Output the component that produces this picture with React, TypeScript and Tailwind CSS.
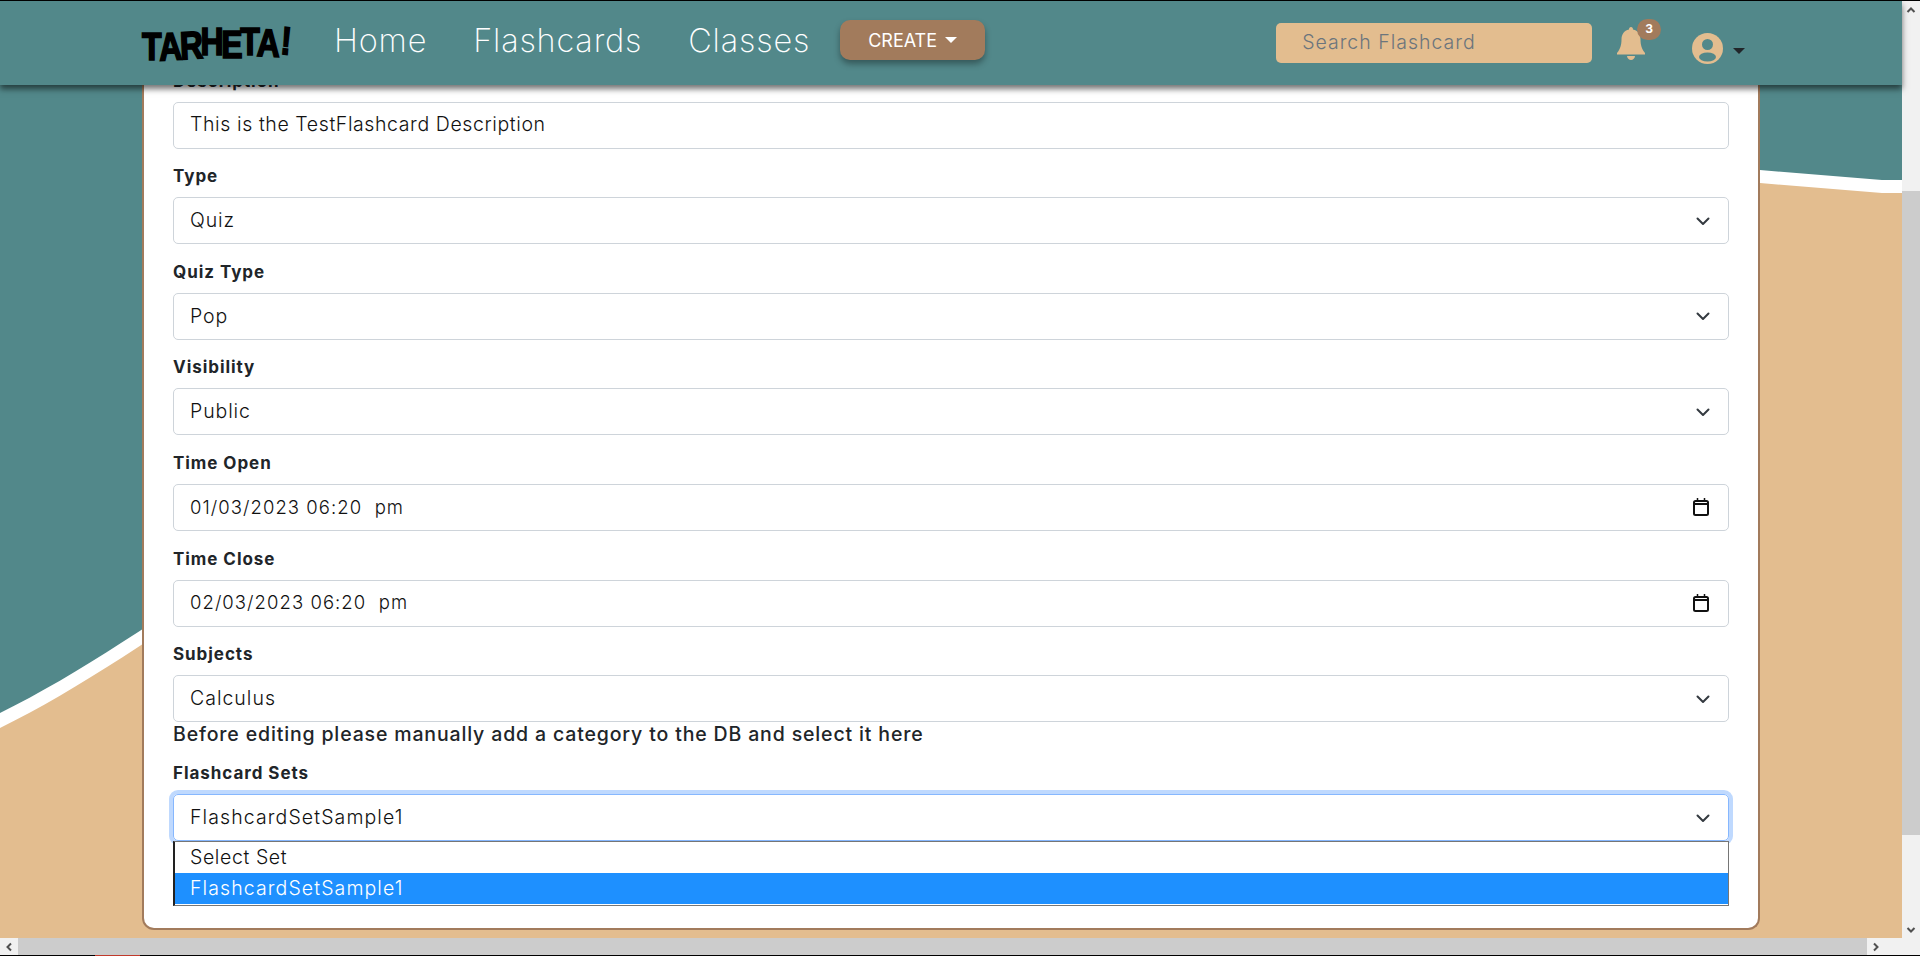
const POPPINS = "font-['Inter','Noto_Sans',sans-serif]";

function Chevron() {
  return (
    <svg width="16" height="16" viewBox="0 0 16 16" fill="none" stroke="#343a40" strokeWidth="2" strokeLinecap="round" strokeLinejoin="round">
      <path d="M2.500 5.500L8 11l5.500-5.500" />
    </svg>
  );
}

function FieldLabel({ children }: { children: string }) {
  return <label className="block mb-[9px] text-[17px] leading-6 font-bold text-[#212529] tracking-[0.95px]">{children}</label>;
}

function SelectField({ label, value }: { label: string; value: string }) {
  return (
    <div className="mb-[15.6px]">
      <FieldLabel>{label}</FieldLabel>
      <div className="h-[47px] pl-4 pr-[17px] flex items-center justify-between bg-white border border-[#ced4da] rounded-[5px] text-[19.5px] font-light text-[#111] tracking-[0.9px]">
        <span>{value}</span>
        <Chevron />
      </div>
    </div>
  );
}

function DateField({ label, value }: { label: string; value: string }) {
  return (
    <div className="mb-[15.6px]">
      <FieldLabel>{label}</FieldLabel>
      <div className="h-[47px] pl-4 pr-[19px] flex items-center justify-between bg-white border border-[#ced4da] rounded-[5px] text-[18.5px] font-light text-[#111] tracking-[1.05px]">
        <span className="whitespace-pre">{value}</span>
        <svg width="16" height="18" viewBox="0 0 16 18" fill="none" stroke="#111" strokeWidth="2">
          <rect x="1" y="3" width="14" height="14" rx="1.500" />
          <path d="M1 6h14" />
          <path d="M4.500 0v3M11.500 0v3" strokeWidth="1.500" />
        </svg>
      </div>
    </div>
  );
}

function Logo() {
  return (
    <div className="w-[150px] h-[40px] flex items-center font-['Liberation_Sans',sans-serif] font-bold text-black text-[32px] leading-none [-webkit-text-stroke:1.4px_black] tracking-[-2.4px] select-none scale-y-[1.22] origin-center">
      <span className="inline-block translate-y-[3px]">T</span>
      <span className="inline-block translate-y-[3px] -rotate-3">A</span>
      <span className="inline-block translate-y-[2px] -rotate-3">R</span>
      <span className="inline-block -translate-y-[1px]">H</span>
      <span className="inline-block translate-y-[1px]">E</span>
      <span className="inline-block -translate-y-[1px]">T</span>
      <span className="inline-block rotate-2">A</span>
      <span className="inline-block -translate-y-[2px] ml-[3px] rotate-6">!</span>
    </div>
  );
}

function Navbar() {
  return (
    <header className="relative z-10 h-[84px] shrink-0 bg-[#52888a] shadow-[0_4px_6px_rgba(0,0,0,0.55)] flex items-center pl-[142px]">
      <Logo />
      <nav className="ml-[42px] -mt-[3px] flex items-center gap-[46px] text-[32.5px] font-extralight text-white tracking-[0.8px]">
        <span>Home</span>
        <span>Flashcards</span>
        <span>Classes</span>
      </nav>
      <button className="ml-[30px] -mt-[6px] w-[145px] h-[40px] flex items-center justify-center gap-2 rounded-[10px] bg-[#a27b5c] text-white text-[18px] font-normal shadow-[0_4px_6px_rgba(0,0,0,0.35)]">
        CREATE
        <span className="w-0 h-0 border-x-[6px] border-x-transparent border-t-[6px] border-t-white" />
      </button>
      <div className="ml-[291px] w-[316px] h-[40px] flex items-center pl-[26px] rounded-[5px] bg-[#e3bd8f] text-[19.5px] font-light text-[#6c757d] tracking-[1px]">
        Search Flashcard
      </div>
      <div className="relative ml-[25px] w-[28px] h-[33px]">
        <svg width="28" height="33" viewBox="0 0 28 33" fill="#e3bd8f">
          <path d="M14 0c1.300 0 2 1 2 2.500 5 1 7.500 5 7.500 10 0 6 1.500 9 3 11.500l1.500 2v1.500H0V26l1.500-2c1.500-2.500 3-5.500 3-11.500 0-5 2.500-9 7.500-10C12 1 12.700 0 14 0z" />
          <path d="M10 29h8c0 2-2 4-4 4s-4-2-4-4z" />
        </svg>
        <span className="absolute -top-[8px] left-[20px] w-[24px] h-[21px] rounded-full bg-[#a27b5c] flex items-center justify-center text-white text-[12px] font-bold">3</span>
      </div>
      <svg className="ml-[47px] mt-[11px]" width="31" height="31" viewBox="0 0 31 31">
        <circle cx="15.500" cy="15.500" r="15.500" fill="#e3bd8f" />
        <circle cx="15.500" cy="11.500" r="5.500" fill="#52888a" />
        <ellipse cx="15.500" cy="24" rx="8.500" ry="4.500" fill="#52888a" />
      </svg>
      <span className="ml-[10px] mt-[15px] w-0 h-0 border-x-[6px] border-x-transparent border-t-[6px] border-t-[#212529]" />
    </header>
  );
}

function Wave() {
  return (
    <svg className="absolute inset-0 w-[1902px] h-[853px]" viewBox="0 85 1902 853" preserveAspectRatio="none">
      <path d="M0 713C300 565 700 130 1250 130 1450 130 1650 160 1760 170L1882 180H1902V938H0Z" fill="#ffffff" />
      <path d="M0 728C300 580 700 145 1250 143 1450 143 1650 173 1760 183L1882 193H1902V938H0Z" fill="#e3bd8f" />
    </svg>
  );
}

function VScrollbar() {
  return (
    <aside className="w-[18px] shrink-0 bg-[#f1f1f1] flex flex-col items-center text-[#505050]">
      <div className="h-[18px] flex items-center justify-center">
        <svg width="10" height="10" viewBox="0 0 10 10" fill="none" stroke="currentColor" strokeWidth="2"><path d="M1.500 7L5 3.500 8.500 7" /></svg>
      </div>
      <div className="mt-[172px] w-full h-[644px] bg-[#cccccc]" />
      <div className="mt-auto h-[18px] flex items-center justify-center mb-[-1px]">
        <svg width="10" height="10" viewBox="0 0 10 10" fill="none" stroke="currentColor" strokeWidth="2"><path d="M1.500 3L5 6.500 8.500 3" /></svg>
      </div>
    </aside>
  );
}

function HScrollbar() {
  return (
    <div className="h-[17px] shrink-0 bg-[#f1f1f1] flex items-stretch text-[#505050]">
      <div className="w-[18px] flex items-center justify-center">
        <svg width="10" height="10" viewBox="0 0 10 10" fill="none" stroke="currentColor" strokeWidth="2"><path d="M7 1.500L3.500 5 7 8.500" /></svg>
      </div>
      <div className="w-[1849px] bg-[#cccccc]" />
      <div className="flex-1 flex items-center justify-end pr-[39px]">
        <svg width="10" height="10" viewBox="0 0 10 10" fill="none" stroke="currentColor" strokeWidth="2"><path d="M3 1.500L6.500 5 3 8.500" /></svg>
      </div>
    </div>
  );
}

export default function App() {
  return (
    <div className={`h-[956px] w-full overflow-hidden flex flex-col bg-black pt-px ${POPPINS}`}>
      <div className="flex-1 flex min-h-0">
        <div className="w-[1902px] shrink-0 flex flex-col">
          <Navbar />
          <main className="relative flex-1 min-h-0 overflow-hidden bg-[#52888a]">
            <Wave />
            <div className="relative mx-[142px] -mt-[40px] h-[885px] bg-white border-2 border-t-0 border-[#a27b5c] rounded-b-[12px] px-[29px]">
              <div className="pt-[23.6px]">
                <FieldLabel>Description</FieldLabel>
                <div className="h-[47px] mb-[15.6px] pl-4 flex items-center border border-[#ced4da] rounded-[5px] text-[19.5px] font-light text-[#111] tracking-[0.6px]">
                  This is the TestFlashcard Description
                </div>
                <SelectField label="Type" value="Quiz" />
                <SelectField label="Quiz Type" value="Pop" />
                <SelectField label="Visibility" value="Public" />
                <DateField label="Time Open" value="01/03/2023 06:20  pm" />
                <DateField label="Time Close" value="02/03/2023 06:20  pm" />
                <FieldLabel>Subjects</FieldLabel>
                <div className="h-[47px] pl-4 pr-[17px] flex items-center justify-between border border-[#ced4da] rounded-[5px] text-[19.5px] font-light text-[#111] tracking-[1px]">
                  <span>Calculus</span>
                  <Chevron />
                </div>
                <p className="text-[19.5px] leading-6 font-medium text-[#212529] tracking-[0.85px] mb-[15px]">Before editing please manually add a category to the DB and select it here</p>
                <FieldLabel>Flashcard Sets</FieldLabel>
                <div className="relative h-[47px] pl-4 pr-[17px] flex items-center justify-between border border-[#86b7fe] rounded-[5px] shadow-[0_0_0_4px_#bfd9fe] text-[19.5px] font-light text-[#111] tracking-[1.1px]">
                  <span>FlashcardSetSample1</span>
                  <Chevron />
                </div>
                <ul className="relative bg-white border border-[#767676] border-l-2 border-l-[#222] text-[19.5px] font-light text-[#111] tracking-[1.1px]">
                  <li className="h-[31px] pl-[15px] flex items-center tracking-[0.6px]">Select Set</li>
                  <li className="h-[31px] pl-[15px] flex items-center bg-[#1e90ff] text-white mb-px">FlashcardSetSample1</li>
                </ul>
              </div>
            </div>
          </main>
        </div>
        <VScrollbar />
      </div>
      <HScrollbar />
      <div className="h-px shrink-0 bg-black pl-[95px]"><div className="w-[45px] h-px bg-[#c0392b]" /></div>
    </div>
  );
}
